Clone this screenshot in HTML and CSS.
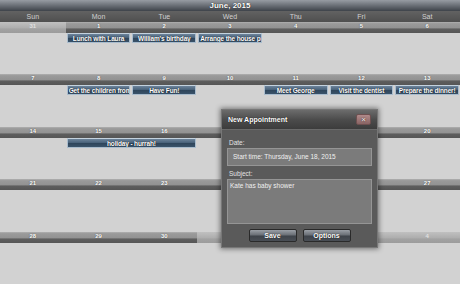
FILE: index.html
```html
<!DOCTYPE html>
<html lang="en">

<head>
    <meta charset="UTF-8">
    <meta name="viewport" content="width=device-width, initial-scale=1.0">
    <link rel="stylesheet" href="styles.css">
    <title>Scheduler</title>
</head>

<body>

    <div class="calendar">
        <div class="title">June, 2015</div>

        <div class="daynames">
            <div>Sun</div>
            <div>Mon</div>
            <div>Tue</div>
            <div>Wed</div>
            <div>Thu</div>
            <div>Fri</div>
            <div>Sat</div>
        </div>

        <div class="weeks">
            <!-- week 1 -->
            <div class="week">
                <div class="date other">31</div>
                <div class="date">1</div>
                <div class="date">2</div>
                <div class="date">3</div>
                <div class="date">4</div>
                <div class="date">5</div>
                <div class="date">6</div>
                <div class="event col-2">Lunch with Laura</div>
                <div class="event col-3">William's birthday</div>
                <div class="event col-4 left">Arrange the house pi</div>
            </div>

            <!-- week 2 -->
            <div class="week">
                <div class="date">7</div>
                <div class="date">8</div>
                <div class="date">9</div>
                <div class="date">10</div>
                <div class="date">11</div>
                <div class="date">12</div>
                <div class="date">13</div>
                <div class="event col-2 left">Get the children from</div>
                <div class="event col-3">Have Fun!</div>
                <div class="event col-5">Meet George</div>
                <div class="event col-6">Visit the dentist</div>
                <div class="event col-7">Prepare the dinner!</div>
            </div>

            <!-- week 3 -->
            <div class="week">
                <div class="date">14</div>
                <div class="date">15</div>
                <div class="date">16</div>
                <div class="date">17</div>
                <div class="date">18</div>
                <div class="date">19</div>
                <div class="date">20</div>
                <div class="event col-2 span-2">holiday - hurrah!</div>
            </div>

            <!-- week 4 -->
            <div class="week">
                <div class="date">21</div>
                <div class="date">22</div>
                <div class="date">23</div>
                <div class="date">24</div>
                <div class="date">25</div>
                <div class="date">26</div>
                <div class="date">27</div>
            </div>

            <!-- week 5 -->
            <div class="week">
                <div class="date">28</div>
                <div class="date">29</div>
                <div class="date">30</div>
                <div class="date other">1</div>
                <div class="date other">2</div>
                <div class="date other">3</div>
                <div class="date other">4</div>
            </div>
        </div>
    </div>

    <div class="dialog">
        <div class="dialog-title">
            <span>New Appointment</span>
            <span class="close">&#215;</span>
        </div>
        <div class="dialog-body">
            <label>Date:</label>
            <div class="field">Start time: Thursday, June 18, 2015</div>
            <label>Subject:</label>
            <div class="field area">Kate has baby shower</div>
            <div class="buttons">
                <button type="button">Save</button>
                <button type="button">Options</button>
            </div>
        </div>
    </div>

</body>

</html>
```

FILE: styles.css
```css
body {
    margin: 0;
    width: 460px;
    height: 284px;
    overflow: hidden;
    background: #d0d0d0;
    font-family: "Liberation Sans", Arial, sans-serif;
    position: relative;
}

.calendar {
    display: flex;
    flex-direction: column;
    height: 284px;
}

.title {
    height: 11px;
    line-height: 11px;
    text-align: center;
    font-size: 8px;
    font-weight: bold;
    color: #fff;
    text-shadow: 0 0 1px #000;
    background: linear-gradient(#979ca3, #6a6f76 50%, #3e434a);
}

.daynames {
    display: grid;
    grid-template-columns: repeat(7, 1fr);
    height: 11px;
    line-height: 11px;
    background: linear-gradient(#626262, #4f4f4f);
    color: #d0d0d0;
    font-size: 7px;
    text-align: center;
}

.weeks {
    flex: 1;
    display: grid;
    grid-template-rows: repeat(5, 1fr);
}

.week {
    display: grid;
    grid-template-columns: repeat(7, 1fr);
    grid-template-rows: 11px 11px;
    align-content: start;
    background: #d2d2d2;
}

.date {
    grid-row: 1;
    height: 11px;
    line-height: 9px;
    text-align: center;
    font-size: 6px;
    font-weight: bold;
    color: #fff;
    text-shadow: 0 0 1px #333;
    background: linear-gradient(#b0b0b0, #9a9a9a 15%, #929292 55%, #5e5e5e 62%, #565656);
}

.date.other {
    color: #e0e0e0;
    text-shadow: none;
    background: linear-gradient(#c0c0c0, #adadad 55%, #a2a2a2 62%, #9c9c9c);
}

.event {
    grid-row: 2;
    margin: 0 1px;
    height: 10px;
    line-height: 9px;
    overflow: hidden;
    white-space: nowrap;
    text-align: center;
    font-size: 6.5px;
    font-weight: bold;
    letter-spacing: -0.15px;
    color: #fff;
    text-shadow: 0 0 1px #000;
    border: 1px solid #a9bccd;
    border-top-color: #c4d2de;
    box-sizing: border-box;
    background: linear-gradient(#6d849b, #4a637b 45%, #2f465c 55%, #3a536a);
}

.event.left {
    text-align: left;
    padding-left: 1px;
}

.col-2 { grid-column: 2; }
.col-3 { grid-column: 3; }
.col-4 { grid-column: 4; }
.col-5 { grid-column: 5; }
.col-6 { grid-column: 6; }
.col-7 { grid-column: 7; }
.span-2 { grid-column: 2 / span 2; }

/* appointment popup */
.dialog {
    position: absolute;
    left: 221px;
    top: 109px;
    width: 157px;
    height: 139px;
    box-sizing: border-box;
    background: #5a5a5a;
    border: 1px solid #777;
    box-shadow: 0 0 5px 1px rgba(0, 0, 0, 0.45);
    display: flex;
    flex-direction: column;
}

.dialog-title {
    height: 19px;
    display: flex;
    align-items: center;
    justify-content: space-between;
    padding: 0 6px;
    background: linear-gradient(#6c6c6c, #4c4c4c 50%, #3c3c3c);
    border-bottom: 1px solid #6a6a6a;
    color: #fff;
    font-size: 7px;
    font-weight: bold;
    text-shadow: 0 0 1px #000;
}

.close {
    width: 13px;
    height: 9px;
    line-height: 9px;
    text-align: center;
    font-size: 8px;
    color: #e6d6d6;
    background: linear-gradient(#b08a8a, #8a6464);
    border: 1px solid #6e5050;
    border-radius: 2px;
}

.dialog-body {
    padding: 9px 5px 0 5px;
    display: flex;
    flex-direction: column;
}

label {
    font-size: 6.5px;
    color: #e4e4e4;
    height: 8px;
    line-height: 8px;
    margin-left: 2px;
    margin-bottom: 1px;
}

.field {
    height: 18px;
    box-sizing: border-box;
    background: #7b7b7b;
    border: 1px solid #959595;
    font-size: 6.5px;
    color: #f0f0f0;
    line-height: 16px;
    padding-left: 5px;
    margin-bottom: 4px;
}

.field.area {
    height: 45px;
    line-height: 9px;
    padding: 1px 2px;
    margin-bottom: 5px;
}

.buttons {
    display: flex;
    justify-content: center;
    gap: 6px;
}

button {
    width: 48px;
    height: 13px;
    padding: 0;
    font-family: "Liberation Sans", Arial, sans-serif;
    font-size: 7px;
    font-weight: bold;
    color: #fff;
    text-shadow: 0 0 1px #000;
    background: linear-gradient(#9a9fa6, #6a6f76 45%, #3e434a 55%, #4a4f56);
    border: 1px solid #2a2a2a;
    border-radius: 2px;
}
```
